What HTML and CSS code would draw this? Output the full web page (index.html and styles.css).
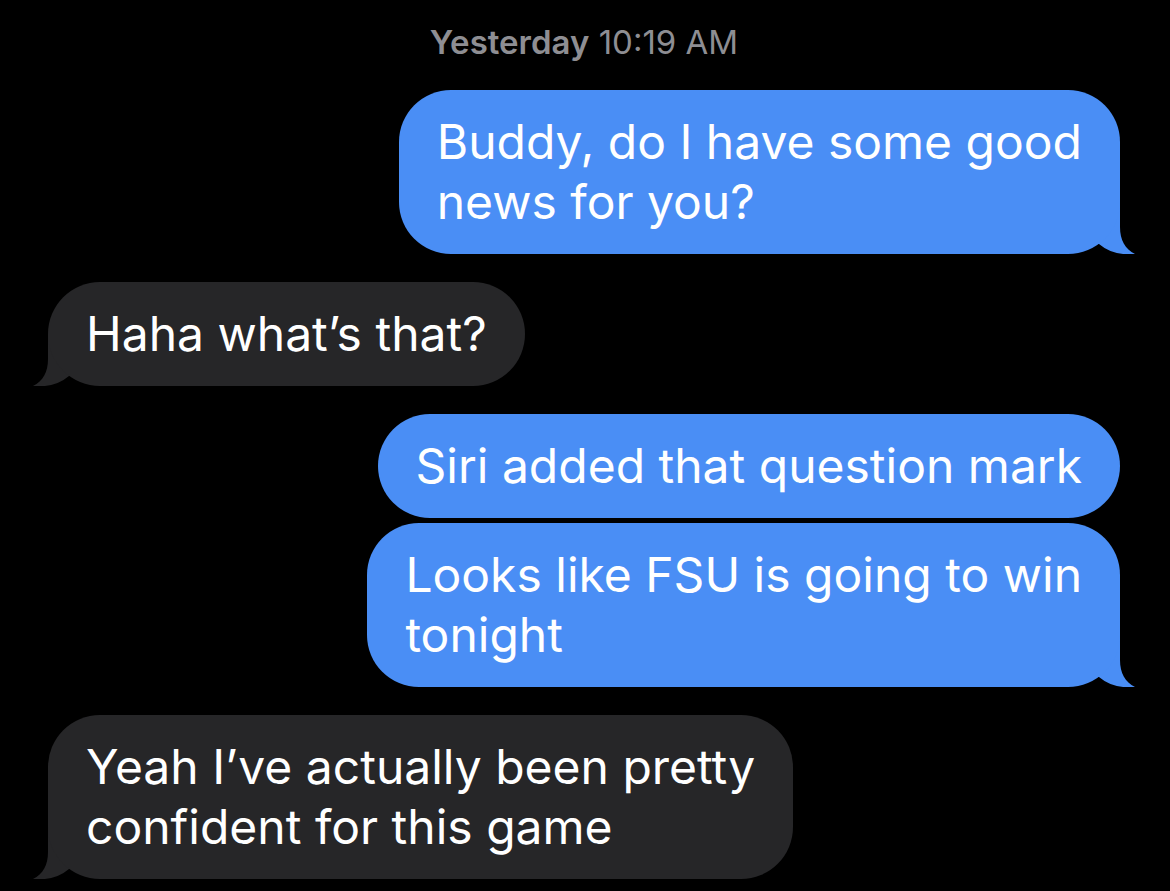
FILE: index.html
```html
<!DOCTYPE html>
<html lang="en">
<head>
    <meta charset="UTF-8">
    <meta name="viewport" content="width=device-width, initial-scale=1.0">
    <title>Messages</title>
    <link rel="stylesheet" href="styles.css">
</head>
<body>
    <div class="thread">
        <div class="stamp"><b>Yesterday</b> 10:19 AM</div>

        <div class="msg sent">
            Buddy, do I have some good<br>news for you?
            <svg class="tail" viewBox="0 0 70 52"><path d="M0 0H52V25C52 38 57 47 67 52Q45 54 31 42H0Z"/></svg>
        </div>

        <div class="msg received">
            Haha what’s that?
            <svg class="tail" viewBox="0 0 70 52"><path d="M0 0H52V25C52 38 57 47 67 52Q45 54 31 42H0Z"/></svg>
        </div>

        <div class="msg sent">Siri added that question mark</div>

        <div class="msg sent cont">
            Looks like FSU is going to win<br>tonight
            <svg class="tail" viewBox="0 0 70 52"><path d="M0 0H52V25C52 38 57 47 67 52Q45 54 31 42H0Z"/></svg>
        </div>

        <div class="msg received">
            Yeah I’ve actually been pretty<br>confident for this game
            <svg class="tail" viewBox="0 0 70 52"><path d="M0 0H52V25C52 38 57 47 67 52Q45 54 31 42H0Z"/></svg>
        </div>
    </div>
</body>
</html>
```

FILE: styles.css
```css
* {
    margin: 0;
    padding: 0;
    box-sizing: border-box;
}

body {
    background: #000;
    color: #fff;
    font-family: Inter, "Noto Sans", sans-serif;
    overflow: hidden;
}

.thread {
    display: flex;
    flex-direction: column;
    gap: 28px;
    padding: 22px 50px 0 48px;
}

/* 時間戳記 */
.stamp {
    text-align: center;
    color: #8e8e93;
    font-size: 33px;
    line-height: 40px;
}

.stamp b {
    font-weight: 600;
}

.msg {
    position: relative;
    width: fit-content;
    padding: 22px 38px;
    border-radius: 52px;
    font-size: 48px;
    line-height: 60px;
    white-space: nowrap;
}

.sent {
    align-self: flex-end;
    background: #4a8ef5;
    color: #fff;
}

.received {
    align-self: flex-start;
    background: #262628;
}

/* 連續訊息 */
.cont {
    margin-top: -23px;
}

/* 尾巴放在泡泡背後 */
.tail {
    position: absolute;
    z-index: -1;
    bottom: 0;
    width: 70px;
    height: 52px;
    display: block;
}

.sent .tail {
    right: -18px;
    fill: #4a8ef5;
}

.received .tail {
    left: -18px;
    fill: #262628;
    transform: scaleX(-1);
}
```
